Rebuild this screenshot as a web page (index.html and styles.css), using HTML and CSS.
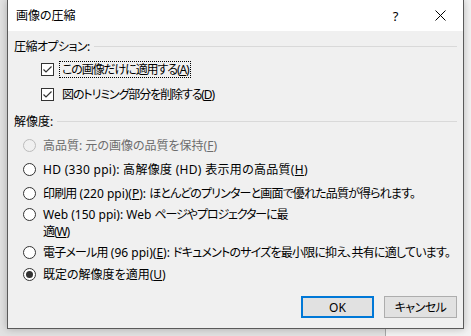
FILE: index.html
```html
<!DOCTYPE html>
<html lang="ja">
<head>
  <meta charset="UTF-8" />
  <title>画像の圧縮</title>
  <link rel="stylesheet" href="styles.css">
</head>
<body>
  <div class="dialog">
    <div class="titlebar">
      <span class="title">画像の圧縮</span>
      <span class="tb-btn help">?</span>
      <span class="tb-btn">
        <svg width="11" height="11" viewBox="0 0 11 11"><path d="M0.5 0.5 L10.5 10.5 M10.5 0.5 L0.5 10.5" stroke="#000" stroke-width="1" fill="none"/></svg>
      </span>
    </div>

    <div class="content">
      <div class="group-label"><span class="tight">圧縮オプション:</span><i class="rule"></i></div>

      <div class="check-row first">
        <span class="checkbox">
          <svg width="11" height="11" viewBox="0 0 11 11"><path d="M1.5 5.5 L4 8 L9.5 2.5" stroke="#333" stroke-width="1.2" fill="none"/></svg>
        </span>
        <span class="label focused tighter">この画像だけに適用する(<u>A</u>)</span>
      </div>
      <div class="check-row second">
        <span class="checkbox">
          <svg width="11" height="11" viewBox="0 0 11 11"><path d="M1.5 5.5 L4 8 L9.5 2.5" stroke="#333" stroke-width="1.2" fill="none"/></svg>
        </span>
        <span class="label tighter">図のトリミング部分を削除する(<u>D</u>)</span>
      </div>

      <div class="group-label res"><span>解像度:</span><i class="rule"></i></div>

      <div class="radio-row disabled r1">
        <span class="radio"></span>
        <span class="label">高品質: 元の画像の品質を保持(<u>F</u>)</span>
      </div>
      <div class="radio-row r2">
        <span class="radio"></span>
        <span class="label wide">HD (330 ppi): 高解像度 (HD) 表示用の高品質(<u>H</u>)</span>
      </div>
      <div class="radio-row r3">
        <span class="radio"></span>
        <span class="label tight-85">印刷用<span class="lat"> (220 ppi)(<u>P</u>): </span>ほとんどのプリンターと画面で優れた品質が得られます。</span>
      </div>
      <div class="radio-row r4">
        <span class="radio"></span>
        <span class="label tighter"><span class="lat">Web (150 ppi): Web </span>ページやプロジェクターに最<br>適(<u>W</u>)</span>
      </div>
      <div class="radio-row r5">
        <span class="radio"></span>
        <span class="label tight-80">電子メール用<span class="lat"> (96 ppi)(<u>E</u>): </span>ドキュメントのサイズを最小限に抑え、共有に適しています。</span>
      </div>
      <div class="radio-row r6">
        <span class="radio checked"></span>
        <span class="label">既定の解像度を適用(<u>U</u>)</span>
      </div>

      <div class="buttons">
        <button class="btn default">OK</button>
        <button class="btn tight">キャンセル</button>
      </div>
    </div>
  </div>
</body>
</html>
```

FILE: styles.css
```css
* {
  box-sizing: border-box;
}
body {
  margin: 0;
  height: 336px;
  overflow: hidden;
  font-family: "Segoe UI", "Noto Sans", "Noto Sans CJK JP", sans-serif;
  font-size: 12px;
  font-feature-settings: "palt";
  color: #000;
  /* window behind the dialog */
  background: linear-gradient(to right, #e2e2e2 0, #e2e2e2 385px, #a8a8a8 385px, #a8a8a8 386px, #f3f3f3 386px);
}

.tight {
  letter-spacing: -0.55px;
}
.tight-80 {
  letter-spacing: -0.8px;
}
.tight-85 {
  letter-spacing: -0.85px;
}
.tighter {
  letter-spacing: -1.1px;
}
.wide {
  letter-spacing: 0.3px;
}
.lat {
  letter-spacing: 0;
}

.dialog {
  width: 457px;
  height: 329px;
  margin-left: 7px;
  background: #f0f0f0;
  border: 1px solid #5a5a5a;
  border-top: none;
  box-shadow: 0 0 8px rgba(0, 0, 0, 0.25);
  display: flex;
  flex-direction: column;
}

/* Title bar */
.titlebar {
  height: 31px;
  background: #fff;
  display: flex;
  align-items: center;
  padding-left: 8px;
}
.title {
  flex: 1;
  line-height: 17px;
  margin-top: -1px;
}
.tb-btn {
  width: 45px;
  height: 31px;
  display: flex;
  align-items: center;
  justify-content: center;
}
.tb-btn.help {
  font-size: 13px;
}

/* Content */
.content {
  flex: 1;
  display: flex;
  flex-direction: column;
  padding: 7px 6px 10px 6px;
}

.group-label {
  display: flex;
  align-items: center;
  height: 17px;
  line-height: 17px;
}
.group-label .rule {
  flex: 1;
  height: 1px;
  background: #d9d9d9;
  margin-left: 4px;
}
.group-label.res {
  margin-top: 10px;
}

.check-row,
.radio-row {
  display: flex;
  align-items: flex-start;
  line-height: 17px;
}
.check-row {
  padding-left: 27px;
}
.check-row.first {
  margin-top: 6px;
}
.check-row.second {
  margin-top: 8px;
}
.checkbox {
  width: 13px;
  height: 13px;
  margin-top: 2px;
  border: 1px solid #333;
  background: #fff;
  display: flex;
  align-items: center;
  justify-content: center;
}
.check-row .label {
  margin-left: 5px;
  padding: 0 2px;
  border: 1px dotted transparent;
  line-height: 15px;
}
.check-row .label.focused {
  border-color: #000;
}

.radio-row {
  padding-left: 9px;
}
.radio {
  width: 13px;
  height: 13px;
  margin-top: 2px;
  flex-shrink: 0;
  border: 1px solid #333;
  border-radius: 50%;
  background: #fff;
  display: flex;
  align-items: center;
  justify-content: center;
}
.radio.checked::after {
  content: "";
  width: 7px;
  height: 7px;
  border-radius: 50%;
  background: #333;
}
.radio-row .label {
  margin-left: 7px;
  white-space: nowrap;
}
.radio-row.disabled {
  color: #6d6d6d;
}
.radio-row.disabled .radio {
  border-color: #bcbcbc;
  background: #f0f0f0;
}
.r1 { margin-top: 7px; }
.r2 { margin-top: 7px; }
.r3 { margin-top: 7px; }
.r4 { margin-top: 4px; }
.r5 { margin-top: 4px; }
.r6 { margin-top: 5px; }

/* Buttons */
.buttons {
  margin-top: 13px;
  display: flex;
  justify-content: flex-end;
  gap: 10px;
}
.btn {
  width: 73px;
  height: 22px;
  font: inherit;
  font-size: 12px;
  color: #000;
  background: #e1e1e1;
  border: 1px solid #adadad;
  padding: 0;
}
.btn.default {
  border: 2px solid #0078d7;
}
```
